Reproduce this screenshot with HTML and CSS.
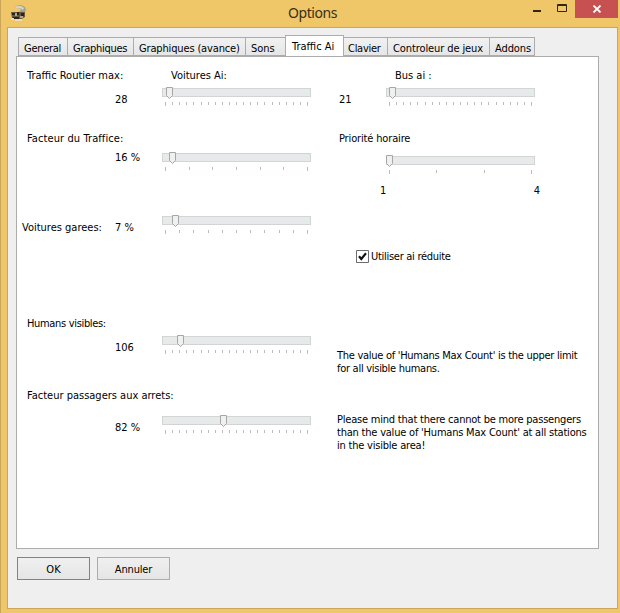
FILE: index.html
```html
<!DOCTYPE html>
<html lang="fr">
<head>
<meta charset="utf-8">
<title>Options</title>
<link rel="stylesheet" href="styles.css">
</head>
<body>
<div class="window">
  <header class="titlebar">
    <svg class="app-icon" width="16" height="17" viewBox="0 0 16 17">
      <path d="M3 3Q5 0 10 0L14 2L15 5L13 8L8 9H4L9 6L10 4L6 3Z" fill="#a3a294"/>
      <path d="M3 3L6 1H10L13 3L12 5L10 3.500L6 3Z" fill="#d8d5c2"/>
      <path d="M0 7H14V12L9 15L1 13Z" fill="#65583d"/>
      <path d="M1 8H4V10H1ZM6 7H8V10H6ZM10 8H13V11H10ZM2 12H8V14H2Z" fill="#29251e"/>
      <path d="M4 8H6V11H4ZM9 11H12V13H9Z" fill="#b3a68a"/>
      <path d="M0 13H3V15H0ZM4 14H11V16H4Z" fill="#e9dcbb"/>
    </svg>
    <h1 class="title">Options</h1>
    <div class="controls">
      <svg class="control" width="42" height="18" viewBox="0 0 42 18"><path d="M0 10h8v2H0z" fill="#302812"/><path d="M24.5 4.5h9v7h-9zM24 5.500h10" fill="none" stroke="#302812"/></svg>
      <div class="close"><svg width="10" height="8" viewBox="0 0 10 8"><path d="M1.5 .5L8.5 7.5M8.5 .5L1.5 7.5" stroke="#fff" stroke-width="1.8"/></svg></div>
    </div>
  </header>
  <main class="client">
    <nav class="tabs">
      <div class="tab w-general tight"><span>General</span></div>
      <div class="tab w-graph tight"><span>Graphiques</span></div>
      <div class="tab w-avance slight"><span>Graphiques (avance)</span></div>
      <div class="tab w-sons"><span>Sons</span></div>
      <div class="tab w-traffic active"><span>Traffic Ai</span></div>
      <div class="tab w-clavier tight"><span>Clavier</span></div>
      <div class="tab w-jeux"><span>Controleur de jeux</span></div>
      <div class="tab w-addons"><span>Addons</span></div>
    </nav>
    <section class="panel">
      <div class="row road">
        <div class="info"><p class="label">Traffic Routier max:</p><p class="value">28</p></div>
        <div class="middle"><p class="caption">Voitures Ai:</p><div class="slider" data-steps="20" data-pos="7"></div></div>
        <div class="bus-value">21</div>
        <div class="bus"><p class="caption">Bus ai :</p><div class="slider" data-steps="20" data-pos="6"></div></div>
      </div>
      <div class="row factor">
        <div class="info"><p class="label loose">Facteur du Traffice:</p><p class="value">16 %</p></div>
        <div class="middle"><div class="slider" data-steps="6" data-pos="10"></div></div>
        <div class="priority">
          <p class="slight">Priorité horaire</p>
          <div class="slider" data-steps="3" data-pos="3"></div>
          <div class="range"><span>1</span><span>4</span></div>
        </div>
      </div>
      <div class="row parked">
        <div class="info"><p class="label">Voitures garees:</p><p class="value">7 %</p></div>
        <div class="middle"><div class="slider" data-steps="10" data-pos="13"></div></div>
        <div class="check tight"><svg width="13" height="13" viewBox="0 0 13 13"><path d="M.5 .5h12v12H.5z" fill="#fff" stroke="#6c6c6c"/><path d="M3 6.3L5.3 9L10 3.2" fill="none" stroke="#111" stroke-width="2.2"/></svg><span>Utiliser ai réduite</span></div>
      </div>
      <div class="row humans">
        <div class="info"><p class="label tighter">Humans visibles:</p><p class="value">106</p></div>
        <div class="middle"><div class="slider" data-steps="20" data-pos="18"></div></div>
        <p class="note">The value of 'Humans Max Count' is the upper limit<br>for all visible humans.</p>
      </div>
      <div class="row passengers">
        <div class="info"><p class="label">Facteur passagers aux arrets:</p><p class="value">82 %</p></div>
        <div class="middle"><div class="slider" data-steps="20" data-pos="61"></div></div>
        <p class="note">Please mind that there cannot be more passengers<br>than the value of 'Humans Max Count' at all stations<br>in the visible area!</p>
      </div>
    </section>
    <footer class="actions"><button class="button primary">OK</button><button class="button slight">Annuler</button></footer>
  </main>
</div>
<script src="script.js"></script>
</body>
</html>
```
FILE: styles.css
```css
* { box-sizing: border-box; }
body { margin: 0; font: 11px/13px "DejaVu Sans Condensed", "DejaVu Sans", sans-serif; font-stretch: condensed; color: #000; }
p { margin: 0; white-space: nowrap; }
.window { width: 620px; height: 613px; background: #efc668; border-left: 1px solid #cba65a; padding: 0 2px 4px 6px; display: flex; flex-direction: column; }
.titlebar { height: 27px; flex: none; display: grid; grid-template-columns: 281px 245px 1fr; }
.app-icon { margin: 5px 0 0 4px; }
.title { margin: 3px 0 0; font: 14px/20px "Noto Sans", sans-serif; letter-spacing: -.45px; color: #3a2e12; }
.controls { display: flex; }
.control { flex: none; }
.close { width: 43px; height: 18px; background: #c75050; display: flex; align-items: center; justify-content: center; }
.client { flex: 1; background: #efefef; border: 1px solid #cba65a; padding: 8px 18px 0 8px; display: flex; flex-direction: column; }
.tabs { height: 20px; padding-left: 2px; display: flex; align-items: flex-end; position: relative; z-index: 1; }
.tab { height: 19px; flex: none; white-space: nowrap; border: 1px solid #acacac; border-left-width: 0; background: linear-gradient(#f1f1f1, #e6e6e6); padding: 4px 0 0 5px; }
.tab:first-child { border-left-width: 1px; }
.tab.active { height: 21px; background: #fff; border-bottom: 0; border-left-width: 1px; padding: 4px 0 0 6px; }
.w-general { width: 50px; }
.w-graph { width: 66px; }
.w-avance { width: 112px; }
.w-sons { width: 39px; border-right-width: 0; }
.w-traffic { width: 59px; }
.w-clavier { width: 44px; padding-left: 4px; }
.w-jeux { width: 102px; letter-spacing: -.1px; }
.w-addons { width: 45px; letter-spacing: -.1px; }
.tight { letter-spacing: -.28px; }
.tighter { letter-spacing: -.33px; }
.slight { letter-spacing: -.15px; }
.loose { letter-spacing: .1px; }
.panel { width: 583px; height: 493px; flex: none; background: #fff; border: 1px solid #acacac; }
.row { display: grid; grid-template-columns: 145px 175px 1fr; }
.info { padding-left: 10px; }
.value { padding-left: 88px; }
.road { height: 68px; padding-top: 12px; grid-template-columns: 145px 177px 47px 1fr; }
.road .value { margin-top: 11px; }
.caption { padding-left: 9px; margin-bottom: 5px; }
.bus-value { padding-top: 24px; }
.factor { height: 84px; padding-top: 7px; }
.factor .value { margin-top: 6px; }
.factor .middle .slider { margin-top: 20px; }
.priority { padding-left: 2px; }
.priority .slider { margin: 10px 0 0 47px; }
.range { width: 160px; margin: 9px 0 0 41px; display: flex; justify-content: space-between; }
.parked { height: 108px; padding-top: 6px; }
.parked .info { display: flex; padding: 6px 0 0 5px; }
.parked .label { width: 93px; }
.parked .value { padding: 0; }
.check { display: flex; gap: 2px; padding: 35px 0 0 19px; }
.humans { height: 72px; }
.humans .value { margin-top: 11px; }
.passengers .value { margin-top: 19px; }
.humans .middle { padding-top: 18px; }
.passengers .middle { padding-top: 26px; }
.note { letter-spacing: -.28px; }
.humans .note { padding-top: 32px; }
.passengers .note { padding-top: 24px; letter-spacing: -.21px; }
.slider { width: 149px; height: 20px; }
.slider svg { display: block; }
.track { fill: #e7eaea; stroke: #d3d5d5; }
.tick { fill: #bcbcbc; }
.thumb { fill: #f0f0f0; stroke: #a6a6a6; }
.actions { display: flex; gap: 7px; padding: 8px 0 0 1px; }
.button { width: 73px; height: 23px; border: 1px solid #acacac; background: linear-gradient(#f0f0f0, #e5e5e5); font: inherit; color: #000; padding: 1px 0 0; }
.button.primary { border: 1px solid #3c96dc; }
```
FILE: script.js
```js
// Builds each trackbar: groove, scale ticks and pointer.
document.querySelectorAll(".slider").forEach(function (el) {
  var steps = Number(el.dataset.steps);
  var x = Number(el.dataset.pos);
  var ticks = "";
  for (var i = 0; i <= steps; i++) {
    var end = i === 0 || i === steps;
    ticks += '<rect class="tick" x="' + (3 + Math.round(142 * i / steps)) + '" y="14" width="1" height="' + (end ? 4 : 3) + '"/>';
  }
  el.innerHTML = '<svg width="149" height="20" viewBox="0 -1 149 20">' +
    '<rect class="track" x=".5" y=".5" width="148" height="8"/>' + ticks +
    '<path class="thumb" d="M' + (x - 2.5) + ' -.5h6v8l-3 3l-3 -3z"/></svg>';
});
```
